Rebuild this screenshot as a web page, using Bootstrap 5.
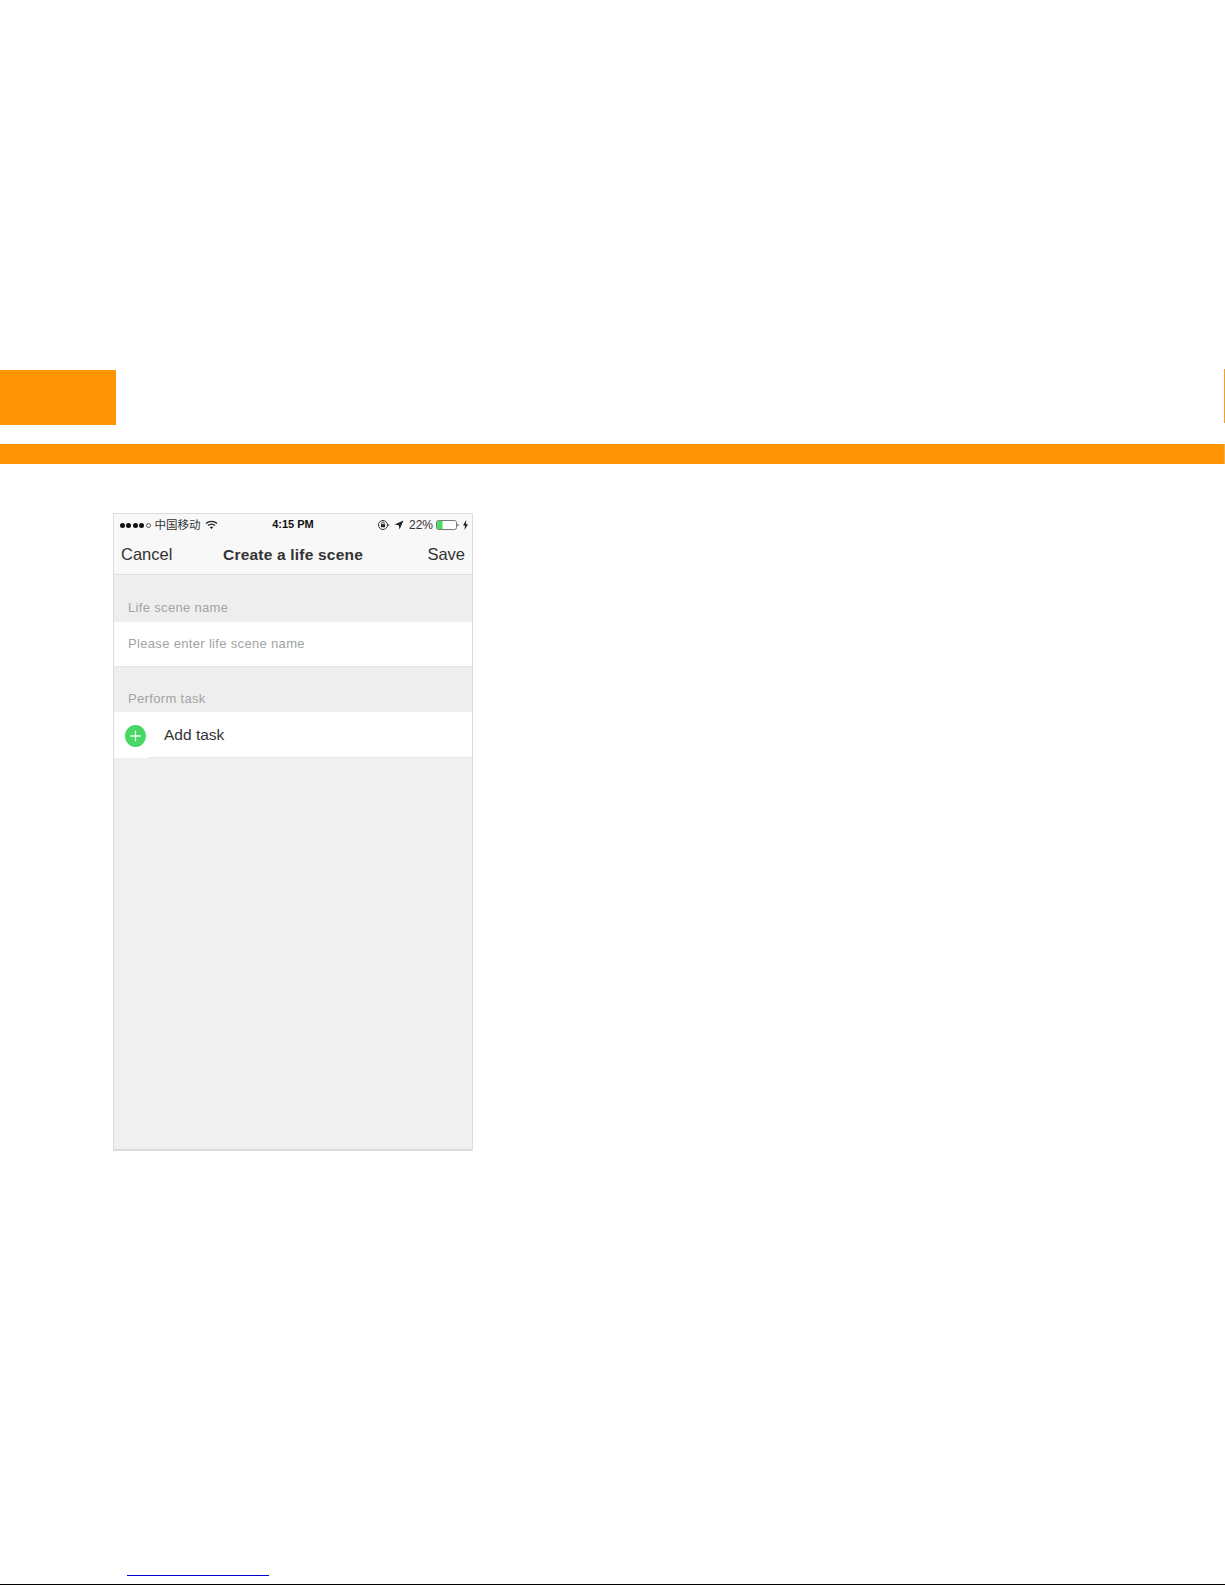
<!DOCTYPE html>
<html lang="en">
<head>
<meta charset="utf-8">
<title>Create a life scene</title>
<link href="https://cdn.jsdelivr.net/npm/bootstrap@5.3.0/dist/css/bootstrap.min.css" rel="stylesheet">
<style>
html,body{height:1585px;overflow:hidden}
body{background:#fff;font-family:"Liberation Sans",Arial,sans-serif;position:relative}
.top-gap{height:370px}
.tab-row{height:55px}
.tab-block{width:116px;background:#ff9505}
.tab-sliver{width:1px;height:54px;margin-top:-1px;background:#f0a030}
.orange-band{height:20px;margin-top:19px;background:#ff9505;border-right:1px solid #f5b050}
.phone-wrap{padding:49px 0 0 113px}
.phone{width:360px;height:638px;background:#f0f0f0;border:1px solid #dcdcdc;border-bottom-width:2px;color:#333}
.phone-head{height:61px;background:#f8f8f8;border-bottom:1px solid #e2e2e2}
.status{height:22px;padding:0 4px 0 6px;font-size:11px;color:#111;position:relative}
.carrier{font-family:"Noto Sans CJK SC","Liberation Sans",sans-serif;font-size:11.5px;line-height:14px;color:#333;margin:-3px 4px 0 4px}
.dots{font-size:0;gap:1.4px}
.dot{width:5px;height:5px;border-radius:50%;background:#111;display:block}
.dot-open{background:none;border:1px solid #555}
.clock{position:absolute;left:0;right:0;top:4px;text-align:center;font-weight:700;font-size:11px;line-height:13px}
.pct{font-size:12px;color:#333;margin:-1px 3px 0 5px}
.bar-title{height:38px;padding:0 7px;font-size:16.5px;color:#333}
.bar-side{width:60px;padding-bottom:2px}
.bar-title strong{font-size:15.5px;letter-spacing:.2px;color:#333;font-weight:700}
.sec-label{background:#eee;height:47px;padding:0 0 5px 14px;font-size:13px;color:#a3a3a3;letter-spacing:.33px}
.sec-label-b{height:45px;padding-bottom:4px}
.sec-row{background:#fff;height:45px;padding-left:14px;font-size:13px;color:#a3a3a3;letter-spacing:.33px;border-bottom:1px solid #e6e6e6}
.add-row{background:#fff;height:46px;position:relative;font-size:15.5px;color:#333;padding-left:50px}
.add-line{position:absolute;left:35px;right:0;bottom:0;height:1px;background:#e6e6e6}
.plus{position:absolute;left:11px;top:13px}
.blue-rule{position:absolute;left:127px;top:1575px;width:142px;height:1px;background:#0000d0}
.black-rule{position:absolute;left:0;right:0;top:1584px;height:1px;background:#000}
</style>
</head>
<body>
<div class="top-gap"></div>
<div class="tab-row d-flex justify-content-between">
  <div class="tab-block"></div>
  <div class="tab-sliver"></div>
</div>
<div class="orange-band"></div>
<div class="phone-wrap">
  <div class="phone">
    <div class="phone-head">
      <div class="status d-flex align-items-center">
        <span class="dots d-flex"><i class="dot"></i><i class="dot"></i><i class="dot"></i><i class="dot"></i><i class="dot dot-open"></i></span>
        <span class="carrier">中国移动</span>
        <svg width="13" height="10" viewBox="0 0 13 10"><path d="M1 3.6a8 8 0 0 1 11 0M3 5.6a5.2 5.2 0 0 1 7 0" fill="none" stroke="#222" stroke-width="1.4"/><path d="M4.8 7.2a2.6 2.6 0 0 1 3.4 0L6.5 9z" fill="#222"/></svg>
        <span class="clock">4:15 PM</span>
        <span class="ms-auto d-flex align-items-center">
          <svg width="13" height="12" viewBox="0 0 13 12"><circle cx="6" cy="6" r="4.5" fill="none" stroke="#333"/><rect x="4" y="5.2" width="4" height="3" fill="#222"/><path d="M4.8 5.4V4.2a1.2 1.2 0 0 1 2.4 0V5.4" fill="none" stroke="#222" stroke-width=".8"/><path d="M10.8 5l1.7 1-1.7 1z" fill="#333"/></svg>
          <svg class="ms-1" width="10" height="10" viewBox="0 0 10 10"><path d="M9.5.5L5.6 9.4 4.7 5.3 .6 4.4z" fill="#222"/></svg>
          <span class="pct">22%</span>
          <svg width="23" height="10" viewBox="0 0 23 10"><rect x=".5" y=".5" width="20" height="9" rx="2" fill="#fff" stroke="#777"/><rect x="1" y="1" width="5.5" height="8" fill="#4cd964"/><path d="M21.5 3.5a1.6 1.6 0 0 1 0 3z" fill="#555"/></svg>
          <svg class="ms-1" width="5" height="10" viewBox="0 0 5 10"><path d="M3.2 0L0 5.6h2L1.5 10 5 4.2H3z" fill="#222"/></svg>
        </span>
      </div>
      <div class="bar-title d-flex align-items-center">
        <span class="bar-side">Cancel</span>
        <strong class="flex-fill text-center">Create a life scene</strong>
        <span class="bar-side text-end">Save</span>
      </div>
    </div>
    <div class="sec-label d-flex align-items-end">Life scene name</div>
    <div class="sec-row d-flex align-items-center">Please enter life scene name</div>
    <div class="sec-label sec-label-b d-flex align-items-end">Perform task</div>
    <div class="add-row d-flex align-items-center">
      <svg class="plus" width="21" height="22" viewBox="0 0 22 22" preserveAspectRatio="none"><circle cx="11" cy="11" r="11" fill="#47d764"/><path d="M11 5.5v11M5.5 11h11" stroke="#e8fbec" stroke-width="1.4"/></svg>
      Add task
      <span class="add-line"></span>
    </div>
  </div>
</div>
<div class="blue-rule"></div>
<div class="black-rule"></div>
<script src="https://cdn.jsdelivr.net/npm/bootstrap@5.3.0/dist/js/bootstrap.bundle.min.js"></script>
</body>
</html>
